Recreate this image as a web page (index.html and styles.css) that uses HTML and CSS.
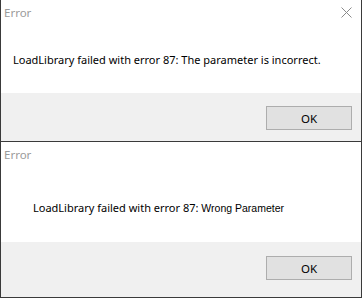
FILE: index.html
```html
<!DOCTYPE html>
<html lang="en">
<head>
    <meta charset="UTF-8">
    <meta name="viewport" content="width=device-width, initial-scale=1.0">
    <title>Error</title>
    <link rel="stylesheet" href="styles.css">
</head>
<body>
    <div class="dialog first">
        <div class="titlebar">
            <span class="title">Error</span>
            <button class="close" aria-label="Close">
                <svg width="11" height="11" viewBox="0 0 11 11">
                    <path d="M0.5 0.5 L10.5 10.5 M10.5 0.5 L0.5 10.5" stroke="#8a8a8a" stroke-width="1" fill="none"/>
                </svg>
            </button>
        </div>
        <div class="message">LoadLibrary failed with error 87: The parameter is incorrect.</div>
        <div class="footer">
            <button class="btn">OK</button>
        </div>
    </div>

    <div class="dialog second">
        <div class="titlebar">
            <span class="title">Error</span>
        </div>
        <div class="message">LoadLibrary failed with error 87: <span class="detail">Wrong Parameter</span></div>
        <div class="footer">
            <button class="btn">OK</button>
        </div>
    </div>
</body>
</html>
```

FILE: styles.css
```css
body {
    margin: 0;
    background: white;
    font-family: "Noto Sans", "Open Sans", sans-serif;
    font-size: 11px;
    color: #000;
}
.dialog {
    width: 360px;
    border-left: 1px solid #3a3a3a;
    border-right: 1px solid #3a3a3a;
    border-bottom: 1px solid #3a3a3a;
    background: white;
    display: flex;
    flex-direction: column;
}
.titlebar {
    height: 30px;
    display: flex;
    justify-content: space-between;
    align-items: flex-start;
}
.title {
    color: #9b9b9b;
    font-size: 11.5px;
    margin: 5px 0 0 3px;
    line-height: 16px;
}
.close {
    background: none;
    border: none;
    padding: 0;
    margin: 7px 9px 0 0;
    width: 11px;
    height: 11px;
    line-height: 0;
}
.message {
    line-height: 16px;
    white-space: nowrap;
}
.first .message {
    height: 63px;
    padding-left: 12px;
    box-sizing: border-box;
    padding-top: 22px;
}
.second .message {
    height: 70px;
    padding-left: 32px;
    box-sizing: border-box;
    padding-top: 28px;
}
.detail {
    font-family: "Liberation Sans", Arial, sans-serif;
    font-size: 10.5px;
}
.footer {
    background: #f0f0f0;
    display: flex;
    justify-content: flex-end;
    padding-right: 9px;
    box-sizing: border-box;
}
.first .footer {
    height: 48px;
    padding-top: 13px;
}
.second .footer {
    height: 55px;
    padding-top: 14px;
}
.btn {
    width: 86px;
    height: 24px;
    background: #e1e1e1;
    border: 1px solid #adadad;
    font-family: "Noto Sans", "Open Sans", sans-serif;
    font-size: 11.5px;
    color: #000;
    padding: 0;
}
```
